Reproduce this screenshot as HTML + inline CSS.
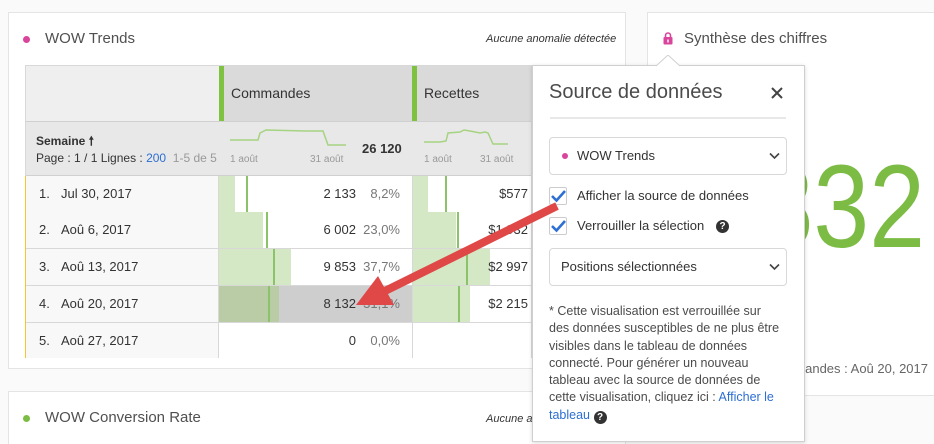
<!DOCTYPE html>
<html><head><meta charset="utf-8"><style>
*{margin:0;padding:0;box-sizing:border-box}
body{width:934px;height:444px;background:#fafafa;font-family:"Liberation Sans",sans-serif;position:relative;overflow:hidden;color:#4b4b4b}
.a{position:absolute}
.panel{position:absolute;background:#fff;border:1px solid #e4e4e4}
.t{font-size:15px;color:#505050;white-space:nowrap}
.sm{font-size:11px;font-style:italic;color:#333;white-space:nowrap}
.row{position:absolute;left:26px;width:505px;height:37px;border-bottom:1px solid #d8d8d8;background:#fff}
.c1{position:absolute;left:0;top:0;width:193px;height:100%;background:#f8f8f8;border-right:1px solid #d8d8d8;font-size:13px;color:#333;line-height:36px;padding-left:13px}
.c1 b{font-weight:normal;display:inline-block;width:22px}
.num{position:absolute;font-size:13px;color:#333;line-height:36px;text-align:right}
.pct{color:#777}
.g{position:absolute;top:0;height:100%;background:#d5e8c6}
.gl{position:absolute;top:0;height:100%;width:2px;background:#8cc36a}
</style></head><body>

<div class="panel" style="left:8px;top:12px;width:618px;height:357px"></div>
<div class="a" style="left:23px;top:36px;width:7px;height:7px;border-radius:50%;background:#d9459a"></div>
<div class="a t" style="left:45px;top:30px">WOW Trends</div>
<div class="a sm" style="left:486px;top:33px">Aucune anomalie détectée</div>

<div class="a" style="left:25px;top:65px;width:507px;height:293px;border:1px solid #d8d8d8;background:#fff"></div>
<div class="a" style="left:26px;top:66px;width:193px;height:55px;background:#efefef"></div>
<div class="a" style="left:219px;top:66px;width:312px;height:55px;background:#dadada"></div>
<div class="a" style="left:219px;top:66px;width:5px;height:55px;background:#7fc241"></div>
<div class="a" style="left:412px;top:66px;width:5px;height:55px;background:#7fc241"></div>
<div class="a" style="left:231px;top:85px;font-size:14px;color:#333">Commandes</div>
<div class="a" style="left:424px;top:85px;font-size:14px;color:#333">Recettes</div>
<div class="a" style="left:26px;top:121px;width:505px;height:55px;background:#e8e8e8;border-top:1px solid #d0d0d0;border-bottom:1px solid #d0d0d0"></div>
<div class="a" style="left:36px;top:132px;font-size:12px;font-weight:bold;color:#333">Semaine 🠕</div>
<div class="a" style="left:36px;top:151px;font-size:12px;color:#333;white-space:nowrap">Page : 1 / 1 Lignes : <span style="color:#2d6fd2">200</span> <span style="color:#999">&nbsp;1-5 de 5</span></div>
<svg class="a" style="left:226px;top:128px" width="180" height="40"><polyline points="4,12 32,12 34,5 40,2 80,3 97,3 102,17 120,17" fill="none" stroke="#a6d381" stroke-width="1.5"/><text x="4" y="34" font-size="10" fill="#999" font-family="Liberation Sans">1 août</text><text x="84" y="34" font-size="10" fill="#999" font-family="Liberation Sans">31 août</text></svg>
<div class="a" style="left:362px;top:141px;font-size:13px;font-weight:bold;color:#333">26 120</div>
<svg class="a" style="left:420px;top:128px" width="112" height="40"><polyline points="4,14 20,14 26,13 28,5 40,4 44,2 50,3 60,5 65,4 68,5 73,16 88,16" fill="none" stroke="#a6d381" stroke-width="1.5"/><text x="4" y="34" font-size="10" fill="#999" font-family="Liberation Sans">1 août</text><text x="60" y="34" font-size="10" fill="#999" font-family="Liberation Sans">31 août</text></svg>

<div class="a" style="left:25px;top:176px;width:3px;height:182px;background:#f5c531"></div>

<div class="row" style="top:176px"><div class="c1"><b>1.</b>Jul 30, 2017</div>
<div class="g" style="left:193px;width:16px"></div><div class="gl" style="left:220px"></div>
<div class="num" style="left:290px;width:40px">2 133</div><div class="num pct" style="left:330px;width:44px">8,2%</div>
<div class="a" style="left:386px;top:0;width:1px;height:100%;background:#d8d8d8"></div>
<div class="g" style="left:387px;width:15px"></div><div class="gl" style="left:419px"></div>
<div class="num" style="left:460px;width:42px">$577</div></div>

<div class="row" style="top:212px"><div class="c1"><b>2.</b>Aoû 6, 2017</div>
<div class="g" style="left:193px;width:44px"></div><div class="gl" style="left:240px"></div>
<div class="num" style="left:290px;width:40px">6 002</div><div class="num pct" style="left:330px;width:44px">23,0%</div>
<div class="a" style="left:386px;top:0;width:1px;height:100%;background:#d8d8d8"></div>
<div class="g" style="left:387px;width:43px"></div><div class="gl" style="left:431px"></div>
<div class="num" style="left:460px;width:42px">$1 932</div></div>

<div class="row" style="top:249px"><div class="c1"><b>3.</b>Aoû 13, 2017</div>
<div class="g" style="left:193px;width:72px"></div><div class="gl" style="left:247px"></div>
<div class="num" style="left:290px;width:40px">9 853</div><div class="num pct" style="left:330px;width:44px">37,7%</div>
<div class="a" style="left:386px;top:0;width:1px;height:100%;background:#d8d8d8"></div>
<div class="g" style="left:387px;width:77px"></div><div class="gl" style="left:440px"></div>
<div class="num" style="left:460px;width:42px">$2 997</div></div>

<div class="row" style="top:286px"><div class="c1"><b>4.</b>Aoû 20, 2017</div>
<div class="a" style="left:193px;top:0;width:193px;height:100%;background:#cecece"></div>
<div class="a" style="left:193px;top:0;width:60px;height:100%;background:#b9cca5"></div><div class="gl" style="left:242px"></div>
<div class="num" style="left:290px;width:40px">8 132</div><div class="num pct" style="left:330px;width:44px">31,1%</div>
<div class="a" style="left:386px;top:0;width:1px;height:100%;background:#d8d8d8"></div>
<div class="g" style="left:387px;width:57px"></div><div class="gl" style="left:432px"></div>
<div class="num" style="left:460px;width:42px">$2 215</div></div>

<div class="row" style="top:323px;height:35px;border-bottom:none"><div class="c1"><b>5.</b>Aoû 27, 2017</div>
<div class="num" style="left:290px;width:40px">0</div><div class="num pct" style="left:330px;width:44px">0,0%</div>
<div class="a" style="left:386px;top:0;width:1px;height:100%;background:#d8d8d8"></div></div>

<div class="panel" style="left:8px;top:391px;width:618px;height:53px;border-bottom:none"></div>
<div class="a" style="left:23px;top:415px;width:7px;height:7px;border-radius:50%;background:#7cbc45"></div>
<div class="a t" style="left:45px;top:409px">WOW Conversion Rate</div>
<div class="a sm" style="left:486px;top:413px">Aucune anomalie détectée</div>

<div class="panel" style="left:647px;top:12px;width:287px;height:384px;border-right:none"></div>
<svg class="a" style="left:663px;top:32px" width="10" height="13"><rect x="0.5" y="5" width="9" height="7.5" rx="1" fill="#d9459a"/><path d="M2.5 5.5V3.5a2.5 2.5 0 0 1 5 0v2" fill="none" stroke="#d9459a" stroke-width="1.6"/><rect x="4.3" y="7.5" width="1.4" height="3" fill="#fff"/></svg>
<div class="a t" style="left:684px;top:30px">Synthèse des chiffres</div>
<div class="a" style="left:705px;top:148px;width:220px;text-align:right;font-size:118px;color:#7cbc45;line-height:1;transform:scaleX(0.85);transform-origin:right top;white-space:nowrap">832</div>
<div class="a" style="left:700px;top:361px;width:228px;text-align:right;font-size:13px;color:#666;white-space:nowrap">Commandes : Aoû 20, 2017</div>

<div class="a" style="left:532px;top:65px;width:273px;height:377px;background:#fff;border:1px solid #cfcfcf;box-shadow:0 1px 4px rgba(0,0,0,.15)"></div>
<svg class="a" style="left:656px;top:55px" width="24" height="12"><path d="M0 11 L12 0 L24 11" fill="#fff" stroke="#cfcfcf"/></svg>
<div class="a" style="left:549px;top:81px;font-size:20px;color:#4b4b4b;white-space:nowrap">Source de données</div>
<svg class="a" style="left:771px;top:87px" width="12" height="12"><path d="M1 1L11 11M11 1L1 11" stroke="#444" stroke-width="2"/></svg>
<div class="a" style="left:550px;top:117px;width:236px;height:2px;background:#e8e8e8"></div>
<div class="a" style="left:549px;top:137px;width:238px;height:38px;border:1px solid #d8d8d8;border-radius:4px"></div>
<div class="a" style="left:562px;top:153px;width:6px;height:6px;border-radius:50%;background:#d9459a"></div>
<div class="a" style="left:577px;top:148px;font-size:13px;color:#333">WOW Trends</div>
<svg class="a" style="left:769px;top:152px" width="11" height="8"><path d="M1 1.5L5.5 6L10 1.5" fill="none" stroke="#444" stroke-width="1.6"/></svg>
<div class="a" style="left:549px;top:187px;width:18px;height:18px;border:1px solid #ccc;border-radius:2px;background:#fff"></div>
<svg class="a" style="left:550px;top:188px" width="17" height="16"><path d="M2 8L6.5 12.5L15 3" fill="none" stroke="#2d6fd2" stroke-width="2.6"/></svg>
<div class="a" style="left:577px;top:188px;font-size:13px;color:#333;white-space:nowrap">Afficher la source de données</div>
<div class="a" style="left:549px;top:217px;width:18px;height:18px;border:1px solid #ccc;border-radius:2px;background:#fff"></div>
<svg class="a" style="left:550px;top:218px" width="17" height="16"><path d="M2 8L6.5 12.5L15 3" fill="none" stroke="#2d6fd2" stroke-width="2.6"/></svg>
<div class="a" style="left:577px;top:218px;font-size:13px;color:#333;white-space:nowrap">Verrouiller la sélection</div>
<div class="a" style="left:716px;top:220px;width:13px;height:13px;border-radius:50%;background:#333;color:#fff;font-size:10px;font-weight:bold;text-align:center;line-height:13px">?</div>
<div class="a" style="left:549px;top:248px;width:238px;height:38px;border:1px solid #d8d8d8;border-radius:4px"></div>
<div class="a" style="left:561px;top:259px;font-size:13px;color:#333">Positions sélectionnées</div>
<svg class="a" style="left:769px;top:263px" width="11" height="8"><path d="M1 1.5L5.5 6L10 1.5" fill="none" stroke="#444" stroke-width="1.6"/></svg>
<div class="a" style="left:549px;top:303px;width:250px;font-size:12.5px;line-height:17.3px;color:#4b4b4b;white-space:nowrap">* Cette visualisation est verrouillée sur<br>des données susceptibles de ne plus être<br>visibles dans le tableau de données<br>connecté. Pour générer un nouveau<br>tableau avec la source de données de<br>cette visualisation, cliquez ici : <span style="color:#2d6fd2">Afficher le</span><br><span style="color:#2d6fd2">tableau</span> <span style="display:inline-block;width:13px;height:13px;border-radius:50%;background:#333;color:#fff;font-size:10px;font-weight:bold;text-align:center;line-height:13px;vertical-align:-1px">?</span></div>

<svg class="a" style="left:0;top:0" width="934" height="444"><line x1="557" y1="206" x2="385" y2="291" stroke="#e04848" stroke-width="8"/><polygon points="356,305 378,276 394,305" fill="#e04848"/></svg>
</body></html>
